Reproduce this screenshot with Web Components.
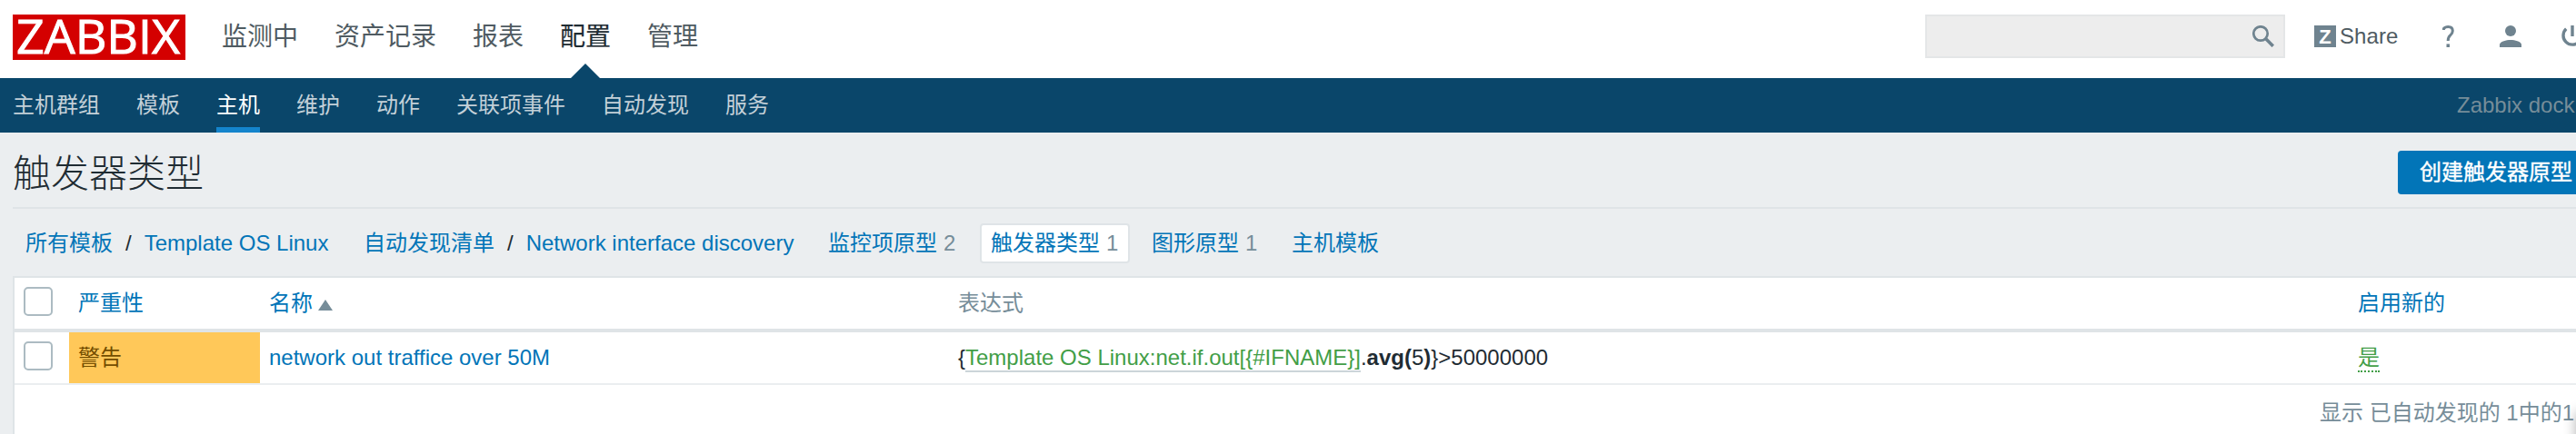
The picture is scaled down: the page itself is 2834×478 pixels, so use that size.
<!DOCTYPE html>
<html lang="zh-CN"><head><meta charset="utf-8"><title>触发器类型</title>
<style>
html,body{margin:0;height:478px;overflow:hidden;background:#ebeef0}
body{font:24px/28px "Liberation Sans","Noto Sans CJK SC",sans-serif;color:#1f2c33;white-space:nowrap}
</style></head><body>
<zbx-page></zbx-page>
<script>
const def=(name,html)=>customElements.define(name,class extends HTMLElement{
  constructor(){super();this.attachShadow({mode:'open'}).innerHTML=html;}
});
def('zbx-logo',`<style>:host{display:block;width:190px;height:50px;background:#d40000;flex:none}svg{display:block;overflow:visible}</style>
<svg width="190" height="50"><text x="4" y="43" font-family="Open Sans,sans-serif" font-size="51" fill="#fff" stroke="#fff" stroke-width="1" textLength="180" lengthAdjust="spacingAndGlyphs">ZABBIX</text></svg>`);
def('zbx-menu-item',`<style>:host{display:block;position:relative;font-size:28px;line-height:32px;color:#4f5b62}
:host([active]){color:#1f2c33;-webkit-text-stroke:.2px}
:host([active])::after{content:"";position:absolute;left:12px;top:45px;border:16px solid transparent;border-top:0;border-bottom-color:#0a466a}</style><slot></slot>`);
def('zbx-sub-item',`<style>:host{display:block;box-sizing:border-box;height:60px;padding-top:16px;color:#c3d0d8}
:host([active]){color:#fff;border-bottom:6px solid #1484cc}</style><slot></slot>`);
def('zbx-search',`<style>:host{display:flex;box-sizing:border-box;width:396px;height:48px;border:2px solid #e4e6e7;background:#ededed;justify-content:flex-end;padding:10px}</style>
<svg width="24" height="24" fill="none" stroke="#6f838f"><circle cx="9" cy="9" r="7.7" stroke-width="2.7"/><path d="M14.8 14.8L22.8 22.8" stroke-width="3.6"/></svg>`);
def('zbx-tools',`<style>:host{display:flex;color:#4f5b62;align-items:center;flex:none;height:48px}svg{display:block;flex:none}.t{margin-left:4px;width:64px;letter-spacing:.1px}.z{font:bold 22px "Liberation Sans",sans-serif;fill:#fff}</style>
<svg width="24" height="24"><path fill="#6f838f" d="M0 0h24v24H0z"/><text class="z" x="5.3" y="20">Z</text></svg><span class="t">Share</span>
<svg style="margin-left:49px" width="14" height="24" fill="none" stroke="#6f838f" stroke-width="3"><path d="M1.5 5V3.5Q3 1.5 6.5 1.5Q11.3 1.5 11.3 6Q11.3 8.8 8.5 11.2Q6.2 13.2 6.2 17"/><path d="M4.5 22.2h3.5" stroke-width="3.6"/></svg>
<svg style="margin-left:49px" width="24" height="24" fill="#6f838f"><circle cx="12" cy="6" r="6"/><path d="M0 24v-3.5C3 14.5 21 14.5 24 20.5V24z"/></svg>
<svg style="margin-left:44px" width="24" height="24" fill="none" stroke="#6f838f" stroke-width="3.4"><path d="M12 0v12M5.2 3.8A10 10 0 1 0 18.8 3.8"/></svg>`);
def('zbx-title',`<style>:host{display:flex;height:82px;margin-left:14px;border-bottom:2px solid #dfe4e7;justify-content:space-between}
h1{margin:21px 0 0;font-size:42px;line-height:50px;font-weight:300}
button{display:block;box-sizing:border-box;width:220px;height:48px;margin:20px -24px 0 0;padding:0 0 0 24px;border:0;border-radius:4px;background:#0275b8;color:#fff;font:inherit;-webkit-text-stroke:.4px;text-align:left}</style>
<h1><slot></slot></h1><button><slot name="action"></slot></button>`);
def('zbx-tab',`<style>:host{display:flex;box-sizing:border-box;height:44px;padding:6px 10px 0;border:2px solid transparent;color:#0275b8}
:host([active]){background:#fff;border-color:#dfe4e7;border-radius:4px}i{font-style:normal;color:#768d99;margin-left:7px}i:empty{display:none}</style><slot></slot><i></i>`);
def('zbx-checkbox',`<style>:host{display:block;box-sizing:border-box;width:32px;height:32px;border:2px solid #acbbc2;border-radius:5px;background:#fff}</style>`);
def('zbx-row',`<style>:host{display:grid;grid-template-columns:60px 210px 758px 1540px 1fr;height:56px;border-bottom:2px solid #ebeef0}
:host([head]){border-bottom:4px solid #dfe4e7}
::slotted(*){padding:14px 0 0 10px}</style><slot></slot>`);
def('zbx-table',`<style>:host{display:block;height:200px;margin-left:14px;background:#fff;border:solid #dfe4e7;border-width:2px 0 0 2px;position:relative}
.link{color:#0275b8}.grey{color:#768d99}.green{color:#429e47}
.sev{background:#ffc859;color:#734d00}
.c{padding-top:10px}
.arr{display:inline-block;border:8px solid transparent;border-top:0;border-bottom:12px solid #768d99;margin-left:6px}
.u{display:inline-block;height:28px;border-bottom:2px solid #ccd5d9}
.yes{display:inline-block;height:28px;border-bottom:2px dotted #429e47}
footer{color:#768d99;margin:17px 0 0 2536px}
.float{position:absolute;left:2818px;top:148px;width:40px;height:60px;box-shadow:0 0 14px rgba(0,0,0,.3)}</style>
<zbx-row head><div class="c"><zbx-checkbox></zbx-checkbox></div><div class="link">严重性</div><div class="link">名称<span class="arr"></span></div><div class="grey">表达式</div><div class="link">启用新的</div></zbx-row>
<zbx-row><div class="c"><zbx-checkbox></zbx-checkbox></div><div class="sev">警告</div><div class="link name">network out traffice over 50M</div><div class="expr">{<span class="u green">Template OS Linux:net.if.out[{#IFNAME}]</span>.<b>avg(</b>5<b>)</b>}&gt;50000000</div><div><span class="yes green">是</span></div></zbx-row>
<footer>显示 已自动发现的 1中的1</footer><div class="float"></div>`);
def('zbx-page',`<style>:host{display:block;width:2834px;height:478px;overflow:hidden}
header{display:flex;height:70px;padding:16px 0 0 14px;background:#fff}
.menu{display:flex;gap:40px;margin:9px auto 0 40px}
zbx-tools{margin-left:32px;width:288px}
.sub{display:flex;gap:40px;height:60px;padding-left:14px;background:#0a466a}
.server{margin-left:auto;width:131px;padding-top:16px;color:#768d99}
.tabs{display:flex;height:58px;padding:16px 0 0 28px;color:#1f2c33}
.crumb{display:flex;padding-top:8px;color:#0275b8}.crumb b{font-weight:400;color:#1f2c33;margin:0 14px}
</style>
<header><zbx-logo></zbx-logo><nav class="menu"><zbx-menu-item>监测中</zbx-menu-item><zbx-menu-item>资产记录</zbx-menu-item><zbx-menu-item>报表</zbx-menu-item><zbx-menu-item active>配置</zbx-menu-item><zbx-menu-item>管理</zbx-menu-item></nav><zbx-search></zbx-search><zbx-tools></zbx-tools></header>
<nav class="sub"><zbx-sub-item>主机群组</zbx-sub-item><zbx-sub-item>模板</zbx-sub-item><zbx-sub-item active>主机</zbx-sub-item><zbx-sub-item>维护</zbx-sub-item><zbx-sub-item>动作</zbx-sub-item><zbx-sub-item>关联项事件</zbx-sub-item><zbx-sub-item>自动发现</zbx-sub-item><zbx-sub-item>服务</zbx-sub-item><span class="server">Zabbix dock</span></nav>
<zbx-title>触发器类型<span slot="action">创建触发器原型</span></zbx-title>
<div class="tabs"><div class="crumb" style="width:372px">所有模板<b>/</b>Template OS Linux</div><div class="crumb" style="width:499px">自动发现清单<b>/</b>Network interface discovery</div>
<zbx-tab count="2" style="width:164px;margin-right:15px">监控项原型</zbx-tab><zbx-tab count="1" active style="width:165px;margin-right:12px">触发器类型</zbx-tab><zbx-tab count="1" style="width:154px">图形原型</zbx-tab><zbx-tab>主机模板</zbx-tab></div>
<zbx-table></zbx-table>`);
const page=document.querySelector('zbx-page').shadowRoot;
page.querySelectorAll('zbx-tab[count]').forEach(t=>t.shadowRoot.querySelector('i').textContent=t.getAttribute('count'));
</script></body></html>
